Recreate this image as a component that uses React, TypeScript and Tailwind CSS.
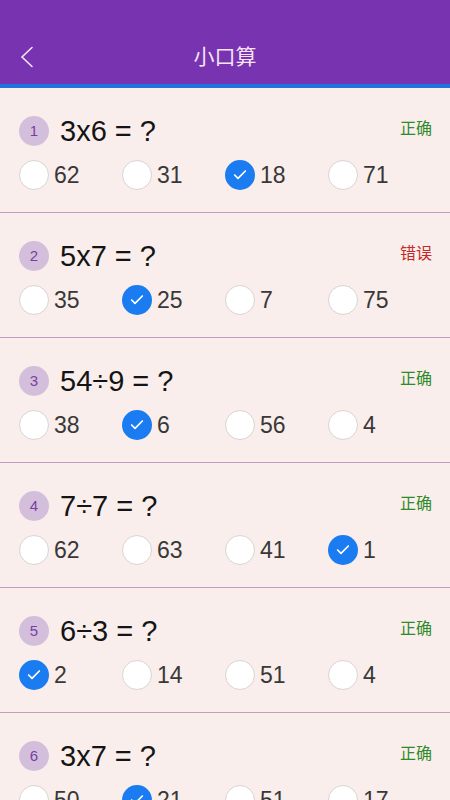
import { Check } from "lucide-react";

type Question = {
  text: string;
  options: string[];
  picked: number;
  correct: boolean;
};

const questions: Question[] = [
  { text: "3x6 = ?", options: ["62", "31", "18", "71"], picked: 2, correct: true },
  { text: "5x7 = ?", options: ["35", "25", "7", "75"], picked: 1, correct: false },
  { text: "54÷9 = ?", options: ["38", "6", "56", "4"], picked: 1, correct: true },
  { text: "7÷7 = ?", options: ["62", "63", "41", "1"], picked: 3, correct: true },
  { text: "6÷3 = ?", options: ["2", "14", "51", "4"], picked: 0, correct: true },
  { text: "3x7 = ?", options: ["50", "21", "51", "17"], picked: 1, correct: true },
];

const font = { fontFamily: '"Liberation Sans", "Noto Sans CJK SC", sans-serif' };

function QuestionItem({ q, index }: { q: Question; index: number }) {
  return (
    <div className="h-[125px] shrink-0 border-b border-[#c49ac4] pt-[28px] pl-[19px] pr-[18px]">
      <div className="flex h-[30px] items-center">
        <span className="flex h-[30px] w-[30px] items-center justify-center rounded-full bg-[#d3bfdc] text-[15px] text-[#7a3ea3]">
          {index + 1}
        </span>
        <span className="ml-[11px] text-[29px] leading-none text-[#141414]">{q.text}</span>
        <span
          className={
            "ml-auto -mt-[4px] text-[16px] " + (q.correct ? "text-[#2f8a2a]" : "text-[#c62828]")
          }
        >
          {q.correct ? "正确" : "错误"}
        </span>
      </div>
      <div className="mt-[14px] flex h-[30px] items-center">
        {q.options.map((opt, i) => (
          <div key={i} className="flex w-[103px] items-center">
            {i === q.picked ? (
              <span className="flex h-[30px] w-[30px] items-center justify-center rounded-full bg-[#1a7cf0]">
                <Check className="h-[16px] w-[16px] text-white" strokeWidth={2.5} />
              </span>
            ) : (
              <span className="h-[30px] w-[30px] rounded-full border border-[#d8d4d4] bg-white" />
            )}
            <span className="ml-[5px] text-[23px] leading-none text-[#383838]">{opt}</span>
          </div>
        ))}
      </div>
    </div>
  );
}

export default function App() {
  return (
    <div className="flex h-[800px] flex-col overflow-hidden bg-[#f9eeeb]" style={font}>
      <header className="relative flex h-[84px] shrink-0 items-start justify-center bg-[#7733b0] pt-[44px]">
        <svg
          className="absolute left-[19px] top-[46px] h-[22px] w-[16px]"
          viewBox="0 0 16 22"
          fill="none"
          stroke="#f4e6f4"
          strokeWidth={1.6}
          strokeLinecap="round"
        >
          <path d="M13 1.5 L3 11 L13 20.5" />
        </svg>
        <span className="text-[21px] leading-[26px] text-[#f6e4f2]">小口算</span>
      </header>
      <div className="h-[4px] shrink-0 bg-[#1f74e0]" />
      {questions.map((q, i) => (
        <QuestionItem key={i} q={q} index={i} />
      ))}
    </div>
  );
}
